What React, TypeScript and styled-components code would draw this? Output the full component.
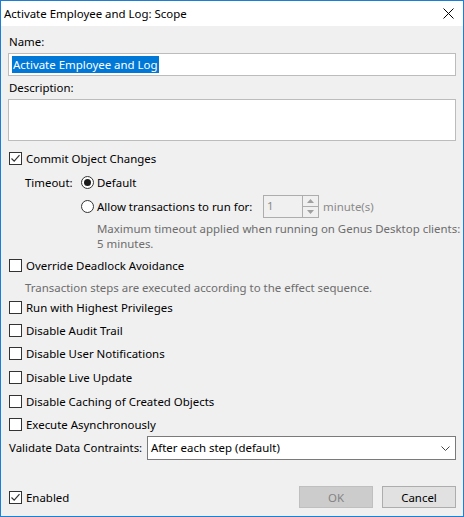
import React from "react";
import styled, { createGlobalStyle } from "styled-components";

const Global = createGlobalStyle`
  html, body { margin: 0; padding: 0; background: #ffffff; }
  * { box-sizing: border-box; }
  body { font-family: "Noto Sans", "Open Sans", sans-serif; font-size: 11.45px; color: #000; }
`;

const Window = styled.div`
  width: 464px;
  height: 517px;
  border: 1px solid #1c7fd6;
  display: flex;
  flex-direction: column;
  background: #f0f0f0;
  overflow: hidden;
`;

const TitleBar = styled.div`
  height: 25px;
  background: #ffffff;
  display: flex;
  align-items: center;
  justify-content: space-between;
  padding: 0 9px 0 3px;
  flex: none;
`;

const Title = styled.span`
  font-size: 11.45px;
  line-height: 16px;
`;

const Body = styled.div`
  flex: 1;
  display: flex;
  flex-direction: column;
  padding: 8px 7px 8px 7px;
`;

const Label = styled.div<{ $mt?: number }>`
  line-height: 16px;
  height: 16px;
  padding-left: 1px;
  margin-top: ${(p) => p.$mt ?? 0}px;
`;

const TextBox = styled.div<{ $h: number; $mt?: number }>`
  height: ${(p) => p.$h}px;
  margin-top: ${(p) => p.$mt ?? 0}px;
  background: #ffffff;
  border: 1px solid #bcbcbc;
  padding: 2px 3px;
  display: flex;
  align-items: flex-start;
`;

const Selected = styled.span`
  background: #0078d7;
  color: #ffffff;
  line-height: 17px;
  height: 17px;
  padding: 0 1px;
`;

const Row = styled.div<{ $mt?: number; $indent?: number; $h?: number }>`
  display: flex;
  align-items: center;
  height: ${(p) => p.$h ?? 17}px;
  margin-top: ${(p) => p.$mt ?? 0}px;
  padding-left: ${(p) => p.$indent ?? 0}px;
  line-height: 16px;
  white-space: nowrap;
`;

const Box = styled.span`
  width: 13px;
  height: 13px;
  border: 1px solid #333333;
  background: #ffffff;
  margin: 0 4px 0 1px;
  flex: none;
  display: flex;
  align-items: center;
  justify-content: center;
`;

const RadioCircle = styled.span<{ $on?: boolean }>`
  width: 13px;
  height: 13px;
  border-radius: 50%;
  border: 1px solid #333333;
  background: #ffffff;
  margin-right: 3px;
  flex: none;
  display: flex;
  align-items: center;
  justify-content: center;
  &::after {
    content: "";
    width: 7px;
    height: 7px;
    border-radius: 50%;
    background: ${(p) => (p.$on ? "#1a1a1a" : "transparent")};
  }
`;

const FieldLabel = styled.span`
  width: 56px;
  flex: none;
`;

const RadioText = styled.span`
  width: 166px;
  flex: none;
`;

const Spin = styled.div`
  width: 56px;
  height: 23px;
  border: 1px solid #adadad;
  background: #f0f0f0;
  display: flex;
  flex: none;
`;

const SpinValue = styled.span`
  flex: 1;
  color: #8a8a8a;
  padding-left: 3px;
  line-height: 20px;
`;

const SpinButtons = styled.div`
  width: 16px;
  border-left: 1px solid #adadad;
  display: flex;
  flex-direction: column;
`;

const SpinBtn = styled.div<{ $top?: boolean }>`
  flex: 1;
  display: flex;
  align-items: center;
  justify-content: center;
  border-bottom: ${(p) => (p.$top ? "1px solid #adadad" : "none")};
`;

const SpinCaption = styled.span`
  color: #8a8a8a;
  margin-left: 4px;
`;

const Note = styled.div<{ $mt?: number; $indent: number }>`
  color: #6d6d6d;
  line-height: 15px;
  white-space: nowrap;
  margin-top: ${(p) => p.$mt ?? 0}px;
  padding-left: ${(p) => p.$indent}px;
`;

const Select = styled.div`
  margin-left: auto;
  width: 309px;
  height: 24px;
  background: #ffffff;
  border: 1px solid #7a7a7a;
  display: flex;
  align-items: center;
  justify-content: space-between;
  padding: 0 5px 0 3px;
`;

const Footer = styled.div`
  margin-top: auto;
  display: flex;
  align-items: center;
  height: 22px;
`;

const Button = styled.button<{ $disabled?: boolean }>`
  width: 74px;
  height: 22px;
  font-family: inherit;
  font-size: 11.45px;
  padding: 0;
  background: ${(p) => (p.$disabled ? "#cccccc" : "#e1e1e1")};
  border: 1px solid ${(p) => (p.$disabled ? "#bfbfbf" : "#adadad")};
  color: ${(p) => (p.$disabled ? "#838383" : "#000000")};
  margin-left: ${(p) => (p.$disabled ? "auto" : "9px")};
`;

const Check = () => (
  <svg width="11" height="11" viewBox="0 0 11 11">
    <path d="M1.5 5.5 L4.2 8.2 L9.5 2.2" fill="none" stroke="#333" strokeWidth="1.2" />
  </svg>
);

const CheckBox = ({ checked, label, mt }: { checked?: boolean; label: string; mt?: number }) => (
  <Row $mt={mt}>
    <Box>{checked && <Check />}</Box>
    <span>{label}</span>
  </Row>
);

export default function App() {
  return (
    <>
      <Global />
      <Window>
        <TitleBar>
          <Title>Activate Employee and Log: Scope</Title>
          <svg width="11" height="11" viewBox="0 0 11 11">
            <path d="M0.5 0.5 L10.5 10.5 M10.5 0.5 L0.5 10.5" stroke="#000" strokeWidth="1" />
          </svg>
        </TitleBar>
        <Body>
          <Label>Name:</Label>
          <TextBox $h={23} $mt={3}>
            <Selected>Activate Employee and Log</Selected>
          </TextBox>
          <Label $mt={4}>Description:</Label>
          <TextBox $h={42} $mt={3} />
          <CheckBox checked label="Commit Object Changes" mt={9} />
          <Row $mt={7} $indent={17}>
            <FieldLabel>Timeout:</FieldLabel>
            <RadioCircle $on />
            <span>Default</span>
          </Row>
          <Row $mt={4} $indent={73} $h={23}>
            <RadioCircle />
            <RadioText>Allow transactions to run for:</RadioText>
            <Spin>
              <SpinValue>1</SpinValue>
              <SpinButtons>
                <SpinBtn $top>
                  <svg width="7" height="4" viewBox="0 0 7 4">
                    <path d="M0 4 L3.5 0 L7 4 Z" fill="#a0a0a0" />
                  </svg>
                </SpinBtn>
                <SpinBtn>
                  <svg width="7" height="4" viewBox="0 0 7 4">
                    <path d="M0 0 L3.5 4 L7 0 Z" fill="#a0a0a0" />
                  </svg>
                </SpinBtn>
              </SpinButtons>
            </Spin>
            <SpinCaption>minute(s)</SpinCaption>
          </Row>
          <Note $mt={3} $indent={89}>
            Maximum timeout applied when running on Genus Desktop clients:
            <br />5 minutes.
          </Note>
          <CheckBox label="Override Deadlock Avoidance" mt={6} />
          <Note $mt={6} $indent={17}>
            Transaction steps are executed according to the effect sequence.
          </Note>
          <CheckBox label="Run with Highest Privileges" mt={4} />
          <CheckBox label="Disable Audit Trail" mt={6} />
          <CheckBox label="Disable User Notifications" mt={6} />
          <CheckBox label="Disable Live Update" mt={7} />
          <CheckBox label="Disable Caching of Created Objects" mt={7} />
          <CheckBox label="Execute Asynchronously" mt={6} />
          <Row $mt={3} $h={24}>
            <Label as="span">Validate Data Contraints:</Label>
            <Select>
              <span>After each step (default)</span>
              <svg width="9" height="5" viewBox="0 0 9 5">
                <path d="M0.5 0.5 L4.5 4.5 L8.5 0.5" fill="none" stroke="#444" strokeWidth="1" />
              </svg>
            </Select>
          </Row>
          <Footer>
            <Box>
              <Check />
            </Box>
            <span>Enabled</span>
            <Button $disabled>OK</Button>
            <Button>Cancel</Button>
          </Footer>
        </Body>
      </Window>
    </>
  );
}
